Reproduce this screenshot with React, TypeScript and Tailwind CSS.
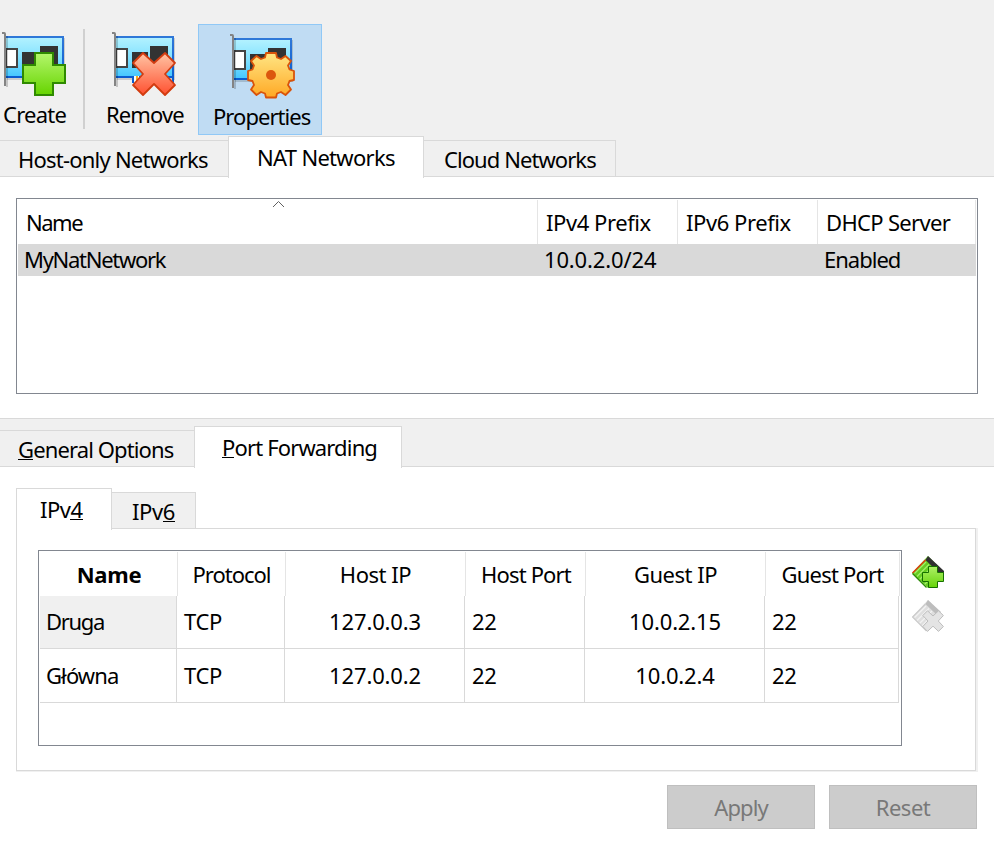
import type { ReactNode } from "react";

function CardBase({ id }: { id: string }) {
  return (
    <>
      <defs>
        <linearGradient id={`${id}-card`} x1="0" y1="0" x2="0" y2="1">
          <stop offset="0" stopColor="#b4f2ff" />
          <stop offset="0.5" stopColor="#84e2ff" />
          <stop offset="1" stopColor="#44c6ff" />
        </linearGradient>
        <linearGradient id={`${id}-edge`} x1="0" y1="0" x2="0" y2="1">
          <stop offset="0" stopColor="#2f78d8" />
          <stop offset="1" stopColor="#0a5cd0" />
        </linearGradient>
      </defs>
      <path d="M5 47H62V6" fill="none" stroke="#000" strokeOpacity="0.15" strokeWidth="2" />
      <rect x="3" y="5" width="58" height="40" fill={`url(#${id}-card)`} stroke={`url(#${id}-edge)`} strokeWidth="2" />
      <rect x="4" y="17" width="11" height="18" fill="#fff" stroke="#444" strokeWidth="2" />
      <rect x="20" y="20" width="16" height="16" fill="#333" />
      <rect x="38" y="14" width="18" height="18" fill="#333" />
      <path d="M5 4V55" fill="none" stroke="#000" strokeOpacity="0.18" strokeWidth="2" />
      <path d="M0 1H2.2Q3 1 3 2V54" fill="none" stroke="#848484" strokeWidth="2" />
    </>
  );
}

function CreateIcon() {
  return (
    <svg className="-ml-px block" width="66" height="66" viewBox="0 0 66 66">
      <CardBase id="create" />
      <defs>
        <linearGradient id="create-plus" x1="0" y1="0" x2="0" y2="1">
          <stop offset="0" stopColor="#b4f66c" />
          <stop offset="1" stopColor="#66d400" />
        </linearGradient>
      </defs>
      <path d="M33 21H51V33H63V51H51V63H33V51H21V33H33Z" fill="url(#create-plus)" stroke="#2f8a00" strokeWidth="2" />
    </svg>
  );
}

function RemoveIcon() {
  return (
    <svg className="block" width="66" height="66" viewBox="0 0 66 66">
      <CardBase id="remove" />
      <defs>
        <linearGradient id="remove-x" x1="0" y1="0" x2="0" y2="1">
          <stop offset="0" stopColor="#ffc4a4" />
          <stop offset="1" stopColor="#ff5030" />
        </linearGradient>
      </defs>
      <rect x="20" y="45" width="2" height="6" fill="#0a5cd0" />
      <rect x="22" y="44" width="5" height="5" fill="#fff" />
      <rect x="24" y="44" width="2" height="5" fill="#f5b020" />
      <rect x="60" y="46" width="2" height="5" fill="#0a5cd0" />
      <path d="M31 21L42 31L53 21L63 31L53 42L63 53L53 63L42 52L31 63L21 53L31 42L21 31Z" fill="url(#remove-x)" stroke="#d23c10" strokeWidth="1.8" strokeLinejoin="round" />
    </svg>
  );
}

function PropertiesIcon() {
  return (
    <svg className="block" width="66" height="66" viewBox="0 0 66 66">
      <CardBase id="props" />
      <defs>
        <linearGradient id="props-gear" x1="0" y1="0" x2="0" y2="1">
          <stop offset="0" stopColor="#ffe684" />
          <stop offset="1" stopColor="#ffa824" />
        </linearGradient>
      </defs>
      <path
        d="M36 19H46L47 23.500L51 25L55.500 22L61 27L58 31.500L59.500 35.500L64 37V46L59.500 47L58 51L61 55.500L55.500 61L51 58L47 59.500L46 63.500H36L35 59.500L31 58L26.500 61L21 55.500L24 51L22.500 47L18 46V37L22.500 35.500L24 31.500L21 27L26.500 22L31 25L35 23.500Z"
        fill="url(#props-gear)"
        stroke="#d9530a"
        strokeWidth="1.8"
        strokeLinejoin="round"
      />
      <circle cx="41" cy="41" r="5" fill="#dc560e" />
    </svg>
  );
}

function AddRuleIcon() {
  return (
    <svg className="block" width="32" height="32" viewBox="0 0 32 32">
      <defs>
        <linearGradient id="add-plus" x1="0" y1="0" x2="0" y2="1">
          <stop offset="0" stopColor="#aef066" />
          <stop offset="1" stopColor="#66d40a" />
        </linearGradient>
      </defs>
      <path d="M16 0L32 16L16 32L0 17Z" fill="#66cc22" />
      <path d="M16 0L32 15V17H27L13.500 4Z" fill="#303030" />
      <path d="M14 6L2.500 17.500M17 8.500L5 20.500M20 11L7.500 23.500M20 16L10 26M20 21L12.500 28.500" stroke="#a4ee68" strokeWidth="1.3" />
      <path d="M13.500 4L0.500 17" stroke="#e03a10" strokeWidth="1.4" />
      <path d="M0.500 17.500L14.500 31.500" stroke="#2d8a08" strokeWidth="1.2" />
      <path d="M16.5 10.5H25.5V16.5H31.5V25.5H25.5V31.5H16.5V25.5H10.5V16.5H16.5Z" fill="url(#add-plus)" stroke="#167000" />
    </svg>
  );
}

function RemoveRuleIcon() {
  return (
    <svg className="block" width="32" height="32" viewBox="0 0 32 32">
      <path d="M16 0L31 15L15 31L0 17Z" fill="#dedede" />
      <path d="M16 0L29 12L25 15L13.500 4Z" fill="#bdbdbd" />
      <path d="M14 6L2.500 17.500M17 8.500L5 20.500M20 11L7.500 23.500M20 16L10 26M20 21L12.500 28.500" stroke="#f2f2f2" strokeWidth="1.4" />
      <path d="M13.500 4L0.500 17L14.500 31" fill="none" stroke="#cbcbcb" strokeWidth="1.2" />
      <path d="M15.5 10.8L21 16L26.5 10.8L31.4 15.5L26.3 21L31.4 26.5L26.5 31.4L21 26.2L15.5 31.4L10.8 26.5L16 21L10.8 15.5Z" fill="#e4e4e4" stroke="#bdbdbd" strokeLinejoin="round" />
    </svg>
  );
}

function Key({ children }: { children: ReactNode }) {
  return <span className="inline-block h-[26px] border-b border-black leading-[30px]">{children}</span>;
}

const gridCols = "grid grid-cols-[137px_108px_180px_120px_180px_134px]";

const rules = [
  { name: "Druga", host: "127.0.0.3", guest: "10.0.2.15", selected: true },
  { name: "Główna", host: "127.0.0.2", guest: "10.0.2.4", selected: false },
];

export default function App() {
  return (
    <div className="h-[844px] w-[994px] overflow-hidden bg-white font-['Noto_Sans',sans-serif] text-[22px] leading-[30px] whitespace-nowrap text-black">
      {/* Toolbar */}
      <div className="flex h-[136px] items-start bg-[#f0f0f0]">
        <button className="mt-8 flex w-[81px] flex-col items-start gap-px pl-[3px]">
          <CreateIcon />
          <span className="tracking-[-0.75px]">Create</span>
        </button>
        <div className="mt-[29px] ml-[2px] h-[100px] w-[2px] bg-[#d0d0d0]" />
        <button className="mt-8 ml-[21px] flex w-[92px] flex-col items-start gap-px">
          <span className="ml-[6px]">
            <RemoveIcon />
          </span>
          <span className="tracking-[-0.9px]">Remove</span>
        </button>
        <button className="mt-6 flex h-[111px] w-[124px] flex-col items-start gap-px border border-[#90c8f6] bg-[#c0dcf3] pt-[9px]">
          <span className="ml-[31px]">
            <PropertiesIcon />
          </span>
          <span className="ml-[14px] tracking-[-0.95px]">Properties</span>
        </button>
      </div>

      {/* Network type tabs */}
      <div className="flex h-[41px] items-end border-b border-[#d9d9d9] bg-[#f0f0f0]">
        <div className="h-9 w-[228px] border-t border-[#d9d9d9] pt-[3px] pl-[18px] tracking-[-0.78px]">Host-only Networks</div>
        <div className="relative -mb-[2px] h-[42px] w-[196px] border-x border-t border-[#d9d9d9] bg-white pt-[5px] pl-[28px] tracking-[-0.7px]">NAT Networks</div>
        <div className="h-9 w-[192px] border-t border-r border-[#d9d9d9] pt-[3px] pl-5 tracking-[-0.93px]">Cloud Networks</div>
      </div>

      {/* Network list */}
      <div className="mt-[21px] ml-4 h-[196px] w-[962px] border border-[#828790] p-px">
        <div className="grid h-11 grid-cols-[520px_140px_140px_158px]">
          <div className="relative border-r border-[#e5e5e5] pt-[7px] pl-2 tracking-[-1.5px]">
            Name
            <svg className="absolute top-0 left-[254px]" width="13" height="8" viewBox="0 0 13 8">
              <path d="M1 7L6.5 1.5L12 7" fill="none" stroke="#606060" />
            </svg>
          </div>
          <div className="border-r border-[#e5e5e5] pt-[7px] pl-2 tracking-[-0.43px]">IPv4 Prefix</div>
          <div className="border-r border-[#e5e5e5] pt-[7px] pl-2 tracking-[-0.43px]">IPv6 Prefix</div>
          <div className="border-r border-[#e5e5e5] pt-[7px] pl-2 tracking-[-0.68px]">DHCP Server</div>
        </div>
        <div className="grid h-8 grid-cols-[520px_280px_158px] bg-[#d9d9d9] pl-[6px]">
          <div className="tracking-[-1.28px]">MyNatNetwork</div>
          <div className="tracking-[-0.15px]">10.0.2.0/24</div>
          <div className="tracking-[-1px]">Enabled</div>
        </div>
      </div>

      {/* Details tabs */}
      <div className="mt-6 flex h-[49px] items-end border-y border-[#d9d9d9] bg-[#f0f0f0]">
        <div className="h-9 w-[194px] border-t border-[#d9d9d9] pt-[3px] pl-[18px] tracking-[-0.88px]">
          <Key>G</Key>eneral Options
        </div>
        <div className="relative -mb-[2px] h-[42px] w-[208px] border-x border-t border-[#d9d9d9] bg-white pt-[5px] pl-[27px] tracking-[-0.85px]">
          <Key>P</Key>ort Forwarding
        </div>
      </div>

      {/* Protocol tabs */}
      <div className="mt-[21px] ml-4 flex h-10 items-end">
        <div className="relative -mb-[2px] h-[42px] w-[96px] border-x border-t border-[#d9d9d9] bg-white pt-[5px] pl-[23px] tracking-[-0.5px]">
          IPv<Key>4</Key>
        </div>
        <div className="h-9 w-[84px] border-t border-r border-[#d9d9d9] bg-[#f0f0f0] pt-[3px] pl-[20px] tracking-[-0.4px]">
          IPv<Key>6</Key>
        </div>
      </div>
      <div className="ml-4 h-[244px] w-[962px] border-r-2 border-b border-[#f0f0f0]">
        <div className="flex h-[243px] border border-[#d9d9d9] pt-[21px] pl-[21px]">
          <div className="h-[196px] w-[864px] border border-[#828790] p-px">
            <div className="grid h-11 grid-cols-[138px_108px_180px_120px_180px_134px] text-center">
              <div className="border-r border-[#e5e5e5] pt-[7px] pl-px font-bold tracking-[-0.3px]">Name</div>
              <div className="border-r border-[#e5e5e5] pt-[7px] tracking-[-1px]">Protocol</div>
              <div className="border-r border-[#e5e5e5] pt-[7px] tracking-[-0.45px]">Host IP</div>
              <div className="border-r border-[#e5e5e5] pt-[7px] pl-px tracking-[-0.85px]">Host Port</div>
              <div className="border-r border-[#e5e5e5] pt-[7px] tracking-[-0.5px]">Guest IP</div>
              <div className="border-r border-[#e5e5e5] pt-[7px] tracking-[-0.8px]">Guest Port</div>
            </div>
            {rules.map((r) => (
              <div
                key={r.name}
                className={`${gridCols} ${r.selected ? "h-[53px] leading-[50px]" : "h-[54px] leading-[52px]"} *:border-r *:border-b *:border-[#d9d9d9]`}
              >
                <div className={r.selected ? "bg-[#f0f0f0] pl-[6px] tracking-[-1.3px]" : "pl-[6px] tracking-[-0.9px]"}>{r.name}</div>
                <div className="pl-[7px] tracking-[-0.4px]">TCP</div>
                <div className="pl-px text-center tracking-[-0.15px]">{r.host}</div>
                <div className="pl-[7px] tracking-[-0.4px]">22</div>
                <div className="pl-px text-center tracking-[-0.15px]">{r.guest}</div>
                <div className="pl-[7px] tracking-[-0.4px]">22</div>
              </div>
            ))}
          </div>
          <div className="mt-[6px] ml-[10px] flex flex-col gap-3">
            <AddRuleIcon />
            <RemoveRuleIcon />
          </div>
        </div>
      </div>

      <div className="mt-[13px] ml-[667px] flex gap-[14px] text-[#787878]">
        <button className="h-11 w-[148px] border border-[#bfbfbf] bg-[#ccc] tracking-[-0.9px]">Apply</button>
        <button className="h-11 w-[148px] border border-[#bfbfbf] bg-[#ccc] tracking-[-0.5px]">Reset</button>
      </div>
    </div>
  );
}
